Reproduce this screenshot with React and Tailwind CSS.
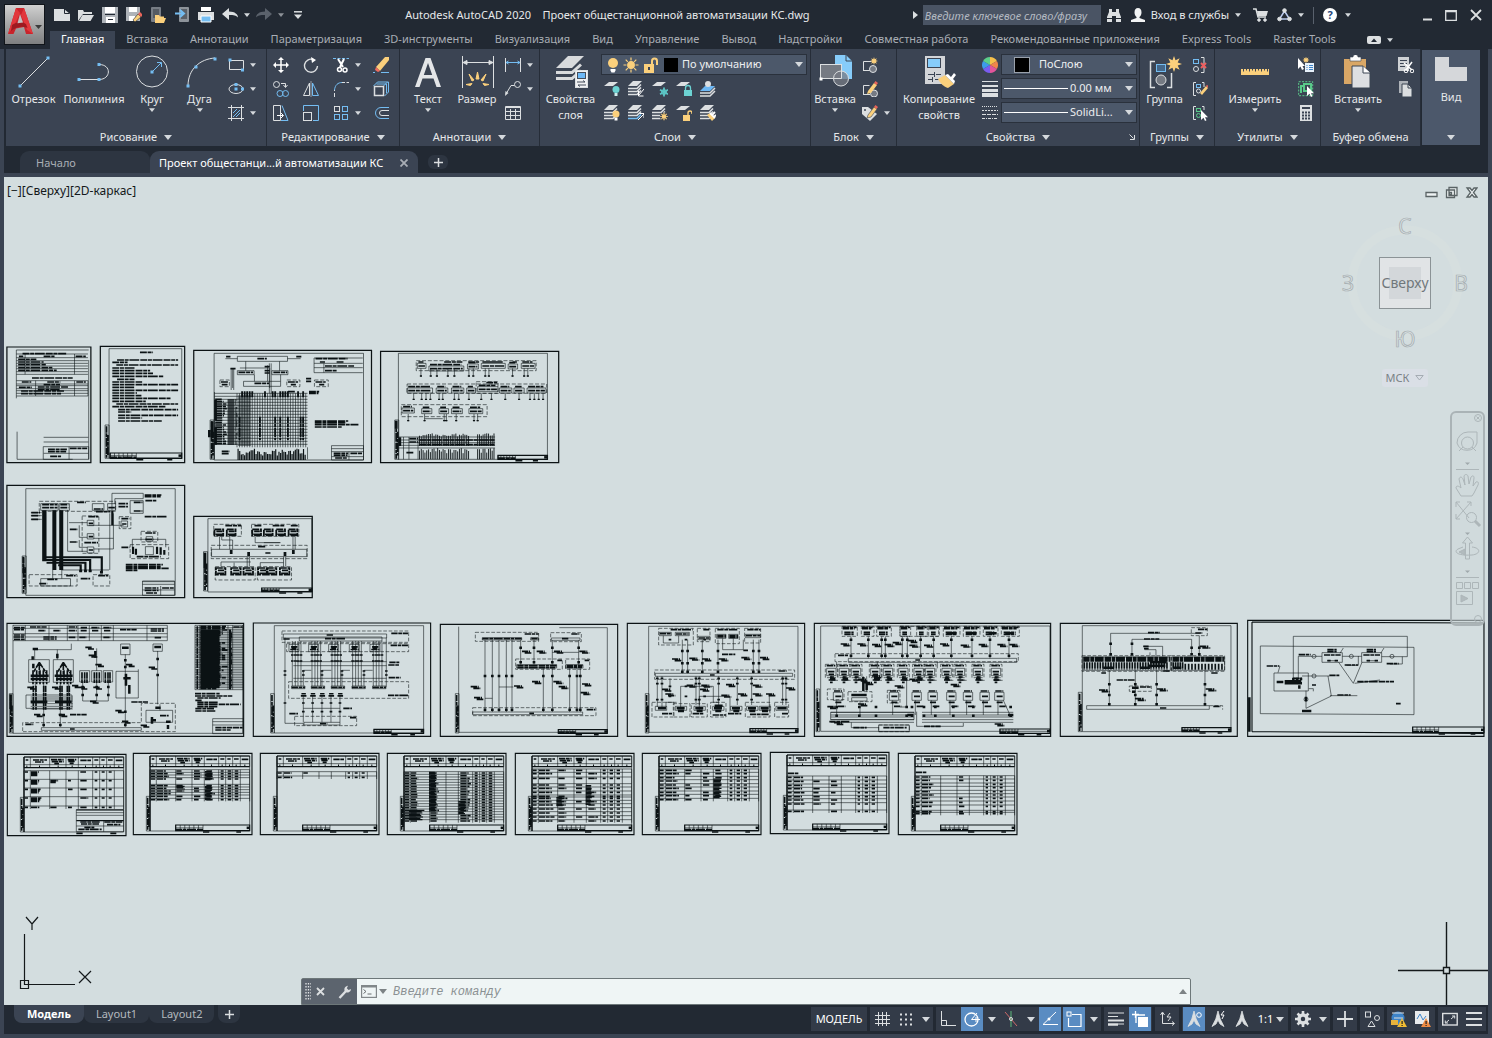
import React, { useState } from "react";
import clsx from "clsx";

const W = "#dcdfe1";
const B = "#74bdf2";
const Y = "#fbd07c";

/* ---------- small shared pieces ---------- */

const Ico = ({ w = 16, h = 16, vb, children }) => (
  <svg width={w} height={h} viewBox={vb || `0 0 ${w} ${h}`} fill="none" stroke={W} className="shrink-0" aria-hidden="true">
    {children}
  </svg>
);

const Caret = ({ big }) => (
  <svg width={big ? 8 : 6} height={big ? 5 : 4} viewBox="0 0 8 5" className="shrink-0" aria-hidden="true">
    <path d="M0 0h8L4 5z" fill="#d5d9dd" />
  </svg>
);

const Dot = ({ x, y, c = B }) => <rect x={x - 1.5} y={y - 1.5} width="3" height="3" fill={c} stroke="none" />;

const layer = (y, c = W) => <path d={`M5 ${y}h9l-5 4H0z`} fill={c} stroke="none" />;
const stack = (low = W) => (
  <>
    <path d="M5 0h9L9 5H0z" fill={W} stroke="none" />
    <path d="M0 7.500h9l4-4M0 10.500h9l4-4" stroke={W} strokeWidth="1.6" />
    <path d="M0 13.500h9l4-4" stroke={low} strokeWidth="1.6" />
  </>
);
const pencil = (
  <g stroke="none">
    <path d="M8 12l6-7 2 2-6 7z" fill={Y} />
    <path d="M14 5l1-1.200 2 2L16 7z" fill="#e8645a" />
  </g>
);
const cursor = <path d="M9 5v10l2.500-2.300L13 16l1.500-.7-1.500-3H16z" fill="#fff" stroke="none" />;
const sun = (cx, cy, r) => (
  <g stroke={Y} strokeWidth="1.2">
    <circle cx={cx} cy={cy} r={r * 0.55} fill={Y} />
    <path d={[0, 45, 90, 135, 180, 225, 270, 315].map((a) => {
      const t = (a * Math.PI) / 180;
      return `M${cx + Math.cos(t) * r * 0.75} ${cy + Math.sin(t) * r * 0.75}L${cx + Math.cos(t) * r * 1.25} ${cy + Math.sin(t) * r * 1.25}`;
    }).join("")} />
  </g>
);
const star = (cx, cy, r) => (
  <path fill={Y} stroke="none" d={"M" + Array.from({ length: 16 }, (_, i) => {
    const t = (i * Math.PI) / 8;
    const k = i % 2 ? r * 0.5 : r;
    return `${cx + Math.cos(t) * k} ${cy + Math.sin(t) * k}`;
  }).join("L") + "z"} />
);

/* ---------- quick access icons ---------- */

const quick = [
  ["Создать", <Ico key="i"><path d="M0 2h10l6 5v7H0z" fill={W} stroke="none" /><path d="M10.500 1.500v5h5" stroke="#222933" /></Ico>],
  ["Открыть", <Ico key="i"><path d="M0 14V3h5l1 2h8v2H5z" fill={W} stroke="none" /><path d="M4.500 8H16l-3.500 6H1z" fill={W} stroke="none" /></Ico>],
  ["Сохранить", <Ico key="i"><path d="M0 0h16v16H0z" fill="#aeb3b9" stroke="none" /><path d="M3 0h10v6H3zM4 10h9v6H4z" fill="#fff" stroke="none" /><path d="M3 7.500h10M6 12.500h5" stroke="#222933" /></Ico>],
  ["Сохранить как", <Ico key="i"><path d="M0 0h14v14H0z" fill="#aeb3b9" stroke="none" /><path d="M3 0h8v5H3zM3 9h6v5H3z" fill="#fff" stroke="none" /><path d="M7 13l5-6 3 3-6 5z" fill={Y} stroke="#222933" strokeWidth=".6" /><path d="M12 7l2-2 3 3-2 2z" fill="#e8645a" stroke="none" /></Ico>],
  ["Открыть из Web", <Ico key="i"><rect x="1" y="0" width="10" height="15" rx="1" fill="#777d85" stroke="none" /><path d="M3 2h6v9H3z" fill="#555b63" stroke="none" /><path d="M5 15V8h4l1 1.500h4V11h2l-2 5H5z" fill={Y} stroke="none" /></Ico>],
  ["Сохранить в Web", <Ico key="i"><rect x="5" y="0" width="10" height="15" rx="1" fill="#8d939a" stroke="none" /><path d="M7 2h6v10H7z" fill="#5b6169" stroke="none" /><path d="M1 6.500h8M6 3l4 3.500L6 10" stroke={B} strokeWidth="2" /></Ico>],
  ["Печать", <Ico key="i"><path d="M0 5h16v8H0z" fill={W} stroke="none" /><path d="M3 0h10v4H3z" fill="#fff" stroke="none" /><path d="M3 9h10v6H3z" fill={B} stroke="#fff" /></Ico>],
];

/* ---------- ribbon icons ---------- */

const big = {
  line: <Ico w={36} h={36}><path d="M4 31L32 3" /><Dot x={4} y={31} /><Dot x={32} y={3} /></Ico>,
  pline: <Ico w={36} h={36}><path d="M3 24.500h20c12 0 13-15 0-15" /><Dot x={3} y={24.500} /><Dot x={23} y={24.500} /><Dot x={23} y={9.500} /></Ico>,
  circle: <Ico w={36} h={36}><circle cx="18" cy="16.500" r="15.500" /><path d="M19 16l8-8M23 7.500h4.500V12" stroke={B} /><Dot x={18} y={17} /></Ico>,
  arc: <Ico w={36} h={36}><path d="M6 31C6 14 18 4 33 3" /><Dot x={6} y={31} /><Dot x={14} y={12} /><Dot x={33} y={4} /></Ico>,
  text: <Ico w={36} h={36}><path d="M5 32L15.500 3h5L31 32h-4.500l-3-8.500h-11l-3 8.500zM13.800 20h8.400L18 8z" fill="#e4e6e8" stroke="none" /></Ico>,
  dim: <Ico w={36} h={36}><path d="M3.500 1v32M34.500 1v32M5 7.500h28" /><path d="M4 7.500l4-2v4zM34 7.500l-4-2v4z" fill={W} /><path d="M7 29.500l6-1-1.500 2zM30 29.500l-6-1 1.500 2zM10 19l5 6-2 1zM27 19l-5 6 2 1zM18.500 17l1.500 7h-3z" fill={Y} stroke={Y} /></Ico>,
  layers: <Ico w={36} h={36}><path d="M15 1h16L19 13H3z" fill="#d8dadc" stroke="none" /><path d="M3 17.500h16l9-8M3 23.500h16l9-8" stroke="#d8dadc" strokeWidth="3" /><rect x="22.500" y="15.500" width="12" height="17" fill="#f0f1f2" /><rect x="24.500" y="17.500" width="8" height="6" fill="#6db8f5" stroke="#444d5a" /><path d="M24 27h8l-2-1.500M33 30h-8l2 1.500" stroke="#444d5a" /></Ico>,
  insert: <Ico w={36} h={36}><path d="M18 0h11l6 6v18H18z" fill="#86ccfa" stroke="none" /><path d="M29 0v6h6" stroke="#3b4453" /><rect x="3.500" y="9.500" width="21" height="14" fill="#757a83" /><circle cx="24" cy="23.500" r="7.500" fill="#757a83" fillOpacity=".75" /><path d="M24.500 9.500v14h-8" /><Dot x={4} y={24} c="#fff" /></Ico>,
  match: <Ico w={36} h={36}><path d="M4 1h20v28H4z" fill="#d3d5d8" stroke="none" /><rect x="6.500" y="3.500" width="13" height="9" fill="#86ccfa" stroke="#3b4453" /><path d="M7 19.500h6M15 19.500h5M13.500 17v5M7 24.500h4M14 24.500h6M11.500 22v5" stroke="#3b4453" /><path d="M17 24l7-4 9 9-6 4c-4-1-8-5-10-9z" fill={Y} stroke="none" /><path d="M24 20l3-1 3 3 3-4 2 2-3 4 2 2-1 3z" fill="#fff" stroke="none" /></Ico>,
  group: <Ico w={36} h={36}><path d="M8 6.500H3.500v26H8M20 32.500h4.500V18" strokeWidth="1.500" /><rect x="9.500" y="9.500" width="9" height="7" fill="#456789" stroke={B} /><circle cx="14" cy="25" r="5" fill="#757a83" />{star(27, 9, 8)}</Ico>,
  measure: <Ico w={36} h={36}><path d="M4 14h28v6H4z" fill={Y} stroke="none" /><path d="M6.500 13.500v3M9.500 13.500v2M12.500 13.500v3M15.500 13.500v2M18.500 13.500v3M21.500 13.500v2M24.500 13.500v3M27.500 13.500v2M30.500 13.500v3" stroke="#3b4453" /></Ico>,
  paste: <Ico w={36} h={36}><path d="M4 4h22v25H4z" fill="#d9a766" stroke="none" /><path d="M10 2h3a2 2 0 0 1 5 0h3v4H10z" fill="#fff" stroke="#3b4453" strokeWidth=".6" /><path d="M12 11h11l7 6v16H12z" fill="#dddfe2" stroke="#3b4453" /><path d="M23 11v7h7" stroke="#3b4453" fill="#fff" /></Ico>,
  view: <Ico w={36} h={36}><path d="M2 4h14v10h18v14H2z" fill="#d5d7da" stroke="none" /></Ico>,
};

const sm = {
  rect: <Ico><path d="M1.500 3.500h14v9h-14z" /><Dot x={2} y={3} /><Dot x={14.500} y={13} /></Ico>,
  ellipse: <Ico><ellipse cx="8" cy="8" rx="7" ry="4.500" /><Dot x={8} y={8} /><Dot x={8} y={3.500} /><Dot x={14.500} y={8} /></Ico>,
  hatch: <Ico><path d="M3.500 0v16M13.500 0v16M0 2.500h16M0 13.500h16" /><path d="M5 8l4-4M5 12l7-7M8 12l4-4" stroke={B} /></Ico>,
  move: <Ico><path d="M8 1v14M1 8h14" strokeWidth="1.500" stroke="#fff" /><path d="M8 0l3 3H5zM8 16l3-3H5zM0 8l3-3v6zM16 8l-3-3v6z" fill="#fff" stroke="none" /></Ico>,
  rotate: <Ico><path d="M10 2.500A6.500 6.500 0 1 0 14.500 9" strokeWidth="1.400" /><path d="M8 0l5 3-4 3z" fill="#fff" stroke="none" /></Ico>,
  trim: <Ico><path d="M0 1.500h16" stroke={B} strokeDasharray="3 1.500" /><path d="M5 2l5 8M11 2L7 10" strokeWidth="2" stroke="#fff" /><circle cx="6.500" cy="12.500" r="2" stroke="#fff" strokeWidth="1.500" /><circle cx="12" cy="13" r="2" stroke="#fff" strokeWidth="1.500" /></Ico>,
  erase: <Ico><path d="M3 10L12 0h4v3L7 14z" fill={Y} stroke="none" /><path d="M3 10l4 4-2 1-3-2z" fill="#f06a5f" stroke="none" /><path d="M0 15.500h2M8 15.500h8" stroke={B} /></Ico>,
  copy: <Ico><circle cx="3.500" cy="3.500" r="3" /><path d="M8 2.500h4.500V6M10.500 4l2 2.500 2-2.500" /><circle cx="7" cy="12.500" r="3" stroke={B} /><circle cx="12.500" cy="12.500" r="3" stroke={B} /></Ico>,
  mirror: <Ico><path d="M6.500 2v12.500h-6z" /><path d="M9.500 2v12.500h6z" stroke={B} /><path d="M8 0v16" strokeWidth=".6" /></Ico>,
  fillet: <Ico><path d="M1.500 16V9" strokeDasharray="4 2" /><path d="M1.500 9C2 4 5 1.500 9 1.500" stroke={B} /><path d="M9 1.500h7" strokeDasharray="3 1.500" /></Ico>,
  box: <Ico><rect x="1.500" y="5.500" width="9" height="9" strokeWidth="1.500" /><path d="M0.500 5l4-4h11v10l-4 4M10.500 5l4-4M3.500 3h10v9" stroke={B} /></Ico>,
  stretch: <Ico><path d="M.500.500h7v15h-7z" /><path d="M9 .500l6 15H8" stroke={B} /><path d="M4 10.500h6M8 8l2.500 2.500L8 13" stroke="#fff" /></Ico>,
  scale: <Ico><path d="M.500 6V.500h15v15H10" stroke={B} /><rect x=".5" y="7.500" width="8" height="8" /></Ico>,
  array: <Ico><rect x="1.500" y="1.500" width="5" height="5" /><g stroke={B}><rect x="9.500" y="1.500" width="5" height="5" /><rect x="1.500" y="9.500" width="5" height="5" /><rect x="9.500" y="9.500" width="5" height="5" /></g></Ico>,
  offset: <Ico><path d="M16 2.500H8a5.500 5.500 0 0 0 0 11h8" stroke={B} /><path d="M16 5.500H9a2.500 2.500 0 0 0 0 5h7" /></Ico>,
  linear: <Ico><path d="M.500 1v14M15.500 1v14" /><path d="M1 5.500h14M3.500 4L1 5.500 3.500 7M12.500 4L15 5.500 12.500 7" stroke={B} /></Ico>,
  leader: <Ico><circle cx="12.500" cy="3.500" r="3" /><path d="M9.500 4.500H6L1 13" /><path d="M0 15l.500-5 3 2z" fill={W} stroke="none" /></Ico>,
  table: <Ico><path d="M.500 1.500h15v13h-15z M1 2.500h14M.500 6.500h15M.500 10.500h15M5.500 4v10M10.500 4v10" /></Ico>,
  l1: <Ico>{layer(1)}<circle cx="12" cy="8.500" r="3.500" fill="#6cd3d3" stroke="none" /><path d="M12 12v3" strokeWidth="3" stroke="#cfeeee" /></Ico>,
  l2: <Ico>{stack()}<path d="M16 8l-5 6M10.500 10v5h5" stroke="#fff" /></Ico>,
  l3: <Ico>{layer(1)}<path d="M12 6.500v9M8 8.800l8 4.400M16 8.800l-8 4.400" stroke="#5cc6c6" strokeWidth="1.800" /><circle cx="12" cy="11" r="2.500" stroke="#5cc6c6" /></Ico>,
  l4: <Ico>{layer(1)}<path d="M8 9h8v6H8z" fill="#6cd3d3" stroke="none" /><path d="M9.500 9V7a2.500 2.500 0 0 1 5 0v2" stroke="#6cd3d3" strokeWidth="1.300" /></Ico>,
  l5: <Ico><path d="M5 5h10l-5 5H0z" fill="#6db8f5" stroke="none" /><path d="M0 12h10l5-5M0 15h10l5-5" strokeWidth="1.500" /><circle cx="8" cy="3" r="3" fill={W} stroke="none" /></Ico>,
  l6: <Ico>{stack()}<circle cx="12" cy="9" r="3.500" fill={Y} stroke="none" /><path d="M12 12.500v3" strokeWidth="3" stroke="#fff" /></Ico>,
  l7: <Ico>{stack(B)}<path d="M10 15l6-6M11.500 8.500h4.500V13" stroke="#fff" /></Ico>,
  l8: <Ico>{stack()}<circle cx="12" cy="11.500" r="4" fill="#3b4453" stroke="none" />{sun(12, 11.500, 3)}</Ico>,
  l9: <Ico>{layer(1)}<path d="M7 10h7v6H7z" fill={Y} stroke="none" /><path d="M12 10V8a2 2 0 0 1 4 0v1" stroke={Y} strokeWidth="1.400" /></Ico>,
  l10: <Ico>{stack()}<path d="M7 10l3-2 5 5-3 3z" fill={Y} stroke="none" /><path d="M10 8l5 5M12 10l3-3M14 12l2-2" stroke="#fff" strokeWidth="1.800" /></Ico>,
  b1: <Ico><path d="M1.500 13.500v-9h8M1 13.500h7" /><circle cx="11" cy="12" r="3.500" fill="#757a83" />{star(12, 4, 4)}</Ico>,
  b2: <Ico><path d="M1.500 13.500v-9h6M1 13.500h7" /><circle cx="12" cy="12.500" r="3.500" fill="#757a83" /><path d="M6 10l6-8 3 2-6 8-4 1z" fill={Y} stroke="none" /><path d="M12 2l1.500-2L16 2l-1.500 2z" fill="#e8645a" stroke="none" /></Ico>,
  b3: <Ico><path d="M0 2h6l9 7-7 7L0 9z" fill={W} stroke="none" /><circle cx="3" cy="5" r="1" fill="#3b4453" stroke="none" /><path d="M6 10l6-8 3 2-6 8-4 1z" fill={Y} stroke="#3b4453" strokeWidth=".6" /><path d="M12 2l1.500-2L16 2l-1.500 2z" fill="#e8645a" stroke="none" /></Ico>,
  g1: <Ico><rect x="1.500" y="2.500" width="5" height="4" stroke={B} /><circle cx="4" cy="12" r="2.500" /><path d="M9 .500h3v15H9" /><path d="M9 6l5 5M14 6l-5 5" stroke="#ef5f5f" strokeWidth="2" /></Ico>,
  g2: <Ico><path d="M4 1.500H1.500v13H4M10 1.500h2V6" /><rect x="4.500" y="3.500" width="4" height="3" stroke={B} /><circle cx="6.500" cy="10" r="2" />{pencil}</Ico>,
  g3: <Ico><path d="M4 1.500H1.500v13H4M10 1.500h2V5" /><rect x="4.500" y="3.500" width="4" height="3" stroke="#59c98a" /><circle cx="6.500" cy="10.500" r="2" stroke="#59c98a" />{cursor}</Ico>,
  u1: <Ico><path d="M0 1v11l2.500-2.500L4 13l2-1-1.500-3H7z" fill="#fff" stroke="none" />{star(8, 3, 3.500)}<path d="M7 6h9v9H7z" fill="#e8f2fb" stroke="none" /><path d="M8.500 8.500h1M11 8.500h4M8.500 10.500h1M11 10.500h4M8.500 12.500h1M11 12.500h4" stroke="#3c83c8" /></Ico>,
  u2: <Ico><rect x=".7" y=".7" width="14" height="14" stroke="#59c98a" strokeDasharray="2 1.300" /><path d="M3 12V5h3M6 3h7v7H6z" stroke="#59c98a" strokeWidth="2" />{cursor}</Ico>,
  u3: <Ico><path d="M2 0h12v16H2z" fill={W} stroke="none" /><path d="M4 2h8v2H4z" fill="#3b4453" stroke="none" /><path d="M4 7.500h8M4 10.500h8M4 13.500h8" stroke="#3b4453" strokeWidth="2" strokeDasharray="2 1" /></Ico>,
  c1: <Ico><path d="M0 0h11v14H0z" fill="#cfd2d5" stroke="none" /><path d="M2 3.500h7M2 6.500h7M2 9.500h5" stroke="#3b4453" /><path d="M6 6l8 7M14 5l-6 8" stroke="#fff" strokeWidth="1.500" /><circle cx="8" cy="14" r="1.800" stroke="#fff" /><circle cx="14" cy="14" r="1.800" stroke="#fff" /></Ico>,
  c2: <Ico><path d="M1 0h9v12H1z" fill="#aeb3b9" stroke="none" /><path d="M4 3h6l4 4v9H4z" fill={W} stroke="#3b4453" /><path d="M10 3v4h4" stroke="#3b4453" /></Ico>,
  wheel: (
    <Ico>
      <g stroke="none">
        <path d="M8 8L8 0A8 8 0 0 1 14.900 4z" fill="#f6c04a" /><path d="M8 8L14.900 4A8 8 0 0 1 14.900 12z" fill="#f0864a" />
        <path d="M8 8L14.900 12A8 8 0 0 1 8 16z" fill="#e2559b" /><path d="M8 8L8 16A8 8 0 0 1 1.100 12z" fill="#7a5cf0" />
        <path d="M8 8L1.100 12A8 8 0 0 1 1.100 4z" fill="#3d9be9" /><path d="M8 8L1.100 4A8 8 0 0 1 8 0z" fill="#5ccf8a" />
      </g>
    </Ico>
  ),
  weights: <Ico><path d="M0 .500h16" /><path d="M0 5h16" strokeWidth="2" /><path d="M0 9.500h16" strokeWidth="3" /><path d="M0 14h16" strokeWidth="4" /></Ico>,
  types: <Ico><path d="M0 1.500h16" strokeDasharray="1 1" /><path d="M0 5.500h16" strokeDasharray="2 1" /><path d="M0 9.500h16" strokeDasharray="4 1" /><path d="M0 13.500h16" strokeDasharray="3 1 1 1" /></Ico>,
};

/* ---------- ribbon building blocks ---------- */

function Panel({ title, width, noCaret, launcher, children }) {
  return (
    <section className={clsx("flex shrink-0 flex-col border-r border-[#262d38] bg-[#3b4453]", width)}>
      <div className="flex h-[79px]">{children}</div>
      <div className="relative flex h-[18px] items-center justify-center">
        <button className="flex items-center gap-[7px] text-[#e6e8ea]">
          {title}
          {!noCaret && <Caret big />}
        </button>
        {launcher && (
          <button aria-label="Параметры панели" className="absolute bottom-[6px] right-1">
            <Ico w={6} h={6}><path d="M.5.5l4 4M5.500 1v4.500H1" /></Ico>
          </button>
        )}
      </div>
    </section>
  );
}

const BigTool = ({ icon, lines, caret, width }) => (
  <button className={clsx("flex shrink-0 flex-col items-center pt-[6px]", width)}>
    {big[icon]}
    {lines.map((l) => <span key={l} className="leading-4 whitespace-nowrap">{l}</span>)}
    {caret && <span className="pt-px"><Caret /></span>}
  </button>
);

const SmallCol = ({ items, width, pad }) => (
  <div className={clsx("flex shrink-0 flex-col pt-1", width, pad)}>
    {items.map(([name, caret]) => (
      <button key={name} aria-label={name} className="flex h-6 items-center gap-[6px]">
        {sm[name]}
        {caret && <Caret />}
      </button>
    ))}
  </div>
);

const Combo = ({ label, text, children }) => (
  <div className="relative flex h-[21px] w-full items-center border border-[#2a313c] bg-[#4c586a] pl-[8px] pr-[3px]">
    {children}
    <select aria-label={label} className="min-w-0 flex-1 appearance-none truncate bg-transparent text-[#eceef0] outline-none">
      <option>{text}</option>
    </select>
    <Caret big />
  </div>
);

/* ---------- sheets of the drawing ---------- */

const r = (x, y, w, h) => `M${x} ${y}h${w}v${h}h${-w}z`;
const vs = (xs, a, b) => xs.map((x) => `M${x} ${a}V${b}`).join("");
const hs = (ys, a, b) => ys.map((y) => `M${a} ${y}H${b}`).join("");
const seq = (a, b, s) => Array.from({ length: Math.floor((b - a) / s) + 1 }, (_, i) => a + i * s);
const rand = (i) => {
  const t = Math.sin(i * 127.1) * 43758.5453;
  return t - Math.floor(t);
};
const rag = (list) => list.map(([x, y, w]) => `M${x} ${y}h${w}`).join("");
// device outline with two rows of marks
const dev = (x, y, w, h) => r(x, y, w, h);
const devText = (x, y, w, h) => `M${x + w * 0.2} ${y + h * 0.35}h${w * 0.6}M${x + w * 0.12} ${y + h * 0.7}h${w * 0.76}`;
// cable terminals
const knots = (xs, ...ys) => xs.flatMap((x) => ys.map((y) => `M${x - 4} ${y}h8`)).join("");
const labels = (list, w = 26) => list.map(([x, y]) => `M${x - w / 2 - 4} ${y - 3}h${w}M${x - w / 2 + 4} ${y + 2}h${w - 2}`).join("");

const Ink = ({ frame, line, dash, text, bold }) => (
  <g fill="none" stroke="#0b1214">
    {frame && <path d={frame} strokeWidth="3.4" />}
    {line && <path d={line} strokeWidth="2" strokeOpacity=".85" />}
    {dash && <path d={dash} strokeWidth="2" strokeDasharray="11 5" strokeOpacity=".85" />}
    {text && <path d={text} strokeWidth="5" strokeDasharray="19 2 11 2 27 3" />}
    {bold && <path d={bold} strokeWidth="7.5" />}
  </g>
);

const Side = ({ x, y, h }) => (
  <Ink line={r(x, y, 11, h)} text={`M${x + 4} ${y + 4}v${h - 6}M${x + 8} ${y + h * 0.3}v${h * 0.6}`} />
);

const Stamp = ({ x, y, x2, w = 76, h = 16 }) => (
  <Ink
    frame={r(x, y, x2 - x, h)}
    line={vs(seq(x, x + w, w / 6), y, y + h) + hs([y + h / 2], x, x + w)}
    text={`M${x} ${y + h - 3}h${w}M${x + w} ${y + h + 4}h20M${x2 - 40} ${y + h + 4}h14`}
    bold={`M${x2 - 9} ${y + h / 2}h9`}
  />
);

function RowOne() {
  const note = [[385, 37, 36], [322, 60, 168], [309, 67, 42], [320, 75, 170], [309, 84, 64], [309, 92, 104], [309, 100, 112], [309, 109, 140], [322, 118, 48], [309, 126, 82], [309, 134, 181], [309, 142, 60], [309, 151, 181], [309, 159, 68], [309, 167, 80], [309, 175, 160], [309, 184, 92], [320, 192, 170], [309, 200, 146], [325, 209, 165], [325, 216, 36], [325, 226, 165], [325, 234, 66], [325, 243, 120]];
  const net = seq(652, 844, 7);
  const tail = seq(655, 842, 4.500);
  const tail2 = seq(1154, 1362, 5).filter((x) => x < 1292 || x > 1310);
  const a = [[1148, 70, 24], [1180, 78, 96], [1286, 72, 30], [1324, 70, 66], [1398, 72, 26], [1434, 70, 38]];
  const b = [[1120, 144, 70], [1200, 144, 32], [1242, 144, 34], [1284, 144, 24], [1314, 140, 56], [1374, 144, 34], [1414, 144, 28], [1450, 144, 52]];
  const c = [[1106, 204, 34], [1160, 206, 28], [1208, 206, 26], [1242, 206, 30], [1290, 206, 38]];
  const pa = [1158, 1185, 1202, 1232, 1250, 1290, 1302, 1335, 1345, 1410, 1442, 1452];
  const pb = [1138, 1160, 1172, 1184, 1208, 1218, 1250, 1262, 1290, 1324, 1352, 1390, 1428, 1458, 1470, 1482, 1494];
  const pc = [1123, 1168, 1222, 1228, 1255, 1304, 1314];
  return (
    <g transform="translate(0 340) scale(.3635 .3333)">
      <Ink
        frame={r(19, 21, 231, 347) + r(276, 19, 232, 349)}
        line={"M45 30H244M45 30V175M47 275V358H200M244 60V358" + hs([42, 53, 62, 70, 78, 86, 95, 103, 122, 132, 137, 146, 152, 160, 168], 45, 242) + vs([69, 205], 42, 103) + vs([98, 205, 242], 122, 168) + hs([292, 306, 340], 120, 243) + r(119, 320, 125, 38) + "M190 320V358" + r(300, 26, 200, 328)}
        text={rag([[62, 41, 120], [52, 49, 12], [120, 49, 30], [208, 49, 28], [50, 58, 50], [50, 66, 70], [50, 74, 76], [50, 83, 94], [50, 91, 106], [88, 114, 112], [60, 126, 26], [130, 126, 36], [210, 126, 26], [120, 134, 45], [52, 142, 36], [104, 141, 84], [104, 148, 60], [58, 153, 118], [58, 161, 110], [132, 328, 52], [132, 335, 50], [138, 349, 30], [192, 325, 48]])}
      />
      <Ink text={rag(note)} />
      <Side x={289} y={255} h={100} />
      <Stamp x={303} y={339} x2={500} w={72} />

      <Ink
        frame={r(533, 31, 489, 337)}
        line={r(589, 40, 411, 320) + r(653, 49, 138, 15) + r(670, 124, 102, 15) + r(653, 92, 46, 12) + r(748, 92, 44, 12) + "M620 56h33M791 56h36M676 64v28M769 64v28M640 84v60M660 84h80M736 76v48M742 84v60M700 104v20M772 104v20" + hs([54, 70, 83, 98], 864, 998) + "M864 54v44M891 70v28" + hs(seq(160, 320, 9), 590, 846) + vs(net, 160, 322) + vs([741, 746], 70, 160) + r(912, 317, 88, 43) + hs([326, 335, 350], 912, 1000) + "M590 156V358M846 322V358M960 335V360M636 84V150M643 84V150"}
        dash={r(605, 120, 26, 20) + r(789, 120, 36, 20) + r(865, 120, 38, 20)}
        text={rag([[708, 56, 26], [622, 50, 12], [815, 50, 14], [656, 97, 40], [752, 97, 38], [700, 130, 40], [608, 126, 20], [610, 134, 16], [792, 126, 28], [800, 134, 14], [868, 126, 28], [878, 134, 14], [728, 80, 14], [728, 92, 14], [728, 99, 14], [634, 86, 14], [842, 116, 14], [842, 124, 14], [868, 56, 88], [880, 66, 14], [926, 66, 20], [894, 78, 80], [894, 92, 34], [792, 155, 20], [850, 155, 28], [850, 160, 26], [866, 243, 92], [866, 248, 86], [866, 254, 120], [866, 261, 74], [610, 334, 22], [610, 341, 20], [918, 340, 40], [918, 346, 38], [922, 354, 34], [964, 340, 34]])}
      />
      <Ink
        line={hs(seq(168, 316, 4), 655, 690)}
        text={rag(seq(178, 316, 7).map((y, i) => [592, y, 18 + rand(i) * 16])) + rag(seq(180, 314, 6).map((y, i) => [626, y, 22 + rand(i + 7) * 6])) + vs(net.filter((_, i) => rand(i) > 0.5), 154, 172) + vs(net.filter((_, i) => rand(i + 40) > 0.8), 230, 300)}
        bold="M593 180V240M593 262V314"
      />
      <path d={tail.map((x, i) => `M${x} ${326 + rand(i) * 22}V360`).join("")} stroke="#0b1214" strokeWidth="3.200" fill="none" />
      <Side x={578} y={240} h={118} />
      <Ink bold="M576 270V292M584 244V290" />

      <Ink
        frame={r(1047, 34, 490, 334)}
        line={r(1096, 40, 410, 318) + [...a, ...b, ...c].map(([x, y, w]) => r(x, y, w, 15)).join("") + vs(pa, 85, 110) + vs(pb, 160, 180) + vs(pc, 222, 244) + hs([291, 300, 308, 316, 324], 1096, 1362) + vs([1110, 1125, 1150], 291, 358) + "M1168 236h50"}
        dash={r(1145, 62, 330, 30) + r(1120, 132, 384, 28) + r(1310, 125, 60, 35) + r(1104, 194, 236, 36)}
        text={[...a, ...b, ...c].map(([x, y, w]) => `M${x + 3} ${y - 4}h${w - 10}M${x + 3} ${y + 8}h${w - 6}`).join("") + rag([[1222, 66, 50], [1288, 66, 30], [1332, 66, 50], [1410, 66, 12], [1338, 128, 30], [1118, 338, 20], [1154, 300, 206], [1154, 314, 206], [1126, 296, 24], [1126, 306, 24]])}
      />
      <path d={[[pa, 108], [pb, 178], [pc, 242]].map(([xs, y]) => xs.map((x) => `M${x - 3} ${y}h6`).join("")).join("")} stroke="#0b1214" strokeWidth="4" />
      <path d={tail2.map((x, i) => `M${x} ${(i % 3 ? 324 : 332) + rand(i) * 8}V358M${x} ${280 + rand(i + 3) * 10}V318`).join("")} stroke="#0b1214" strokeWidth="2.600" fill="none" />
      <Side x={1086} y={240} h={118} />
      <Ink bold="M1090 242V266M1100 292V318" />
      <Stamp x={1370} y={346} x2={1506} w={48} h={12} />

      <Ink
        frame={r(19, 436, 489, 337)}
        line={r(71, 446, 411, 320) + r(112, 491, 48, 20) + r(163, 491, 28, 20) + r(254, 491, 32, 20) + r(296, 491, 22, 20) + r(358, 482, 36, 38) + r(240, 541, 18, 16) + r(240, 581, 18, 16) + r(240, 621, 18, 18) + r(333, 543, 18, 18) + "M308 510V460H394V476H316V492M166 510V600M186 510V634H240M190 548H240M244 556H340M302 520V690M258 595H312M258 627H312V520M85 518h30M85 527h30M85 538h30M218 556v36h22M218 600v22h22M145 690V716M170 716V690H300M364 622V598H402M456 622V598H420" + r(402, 590, 18, 14) + r(400, 620, 22, 24) + r(112, 716, 82, 22) + hs([725, 733, 750], 392, 480) + r(392, 723, 88, 43) + "M442 738V766"}
        dash={r(108, 484, 210, 30) + r(226, 528, 46, 112) + r(328, 530, 32, 36) + r(388, 574, 46, 32) + r(358, 614, 106, 42) + r(80, 704, 132, 34) + r(256, 704, 46, 34)}
        text={rag([[212, 487, 24], [116, 494, 42], [166, 494, 22], [116, 503, 42], [166, 503, 22], [258, 507, 26], [264, 515, 40], [298, 503, 18], [326, 491, 26], [326, 500, 26], [368, 487, 24], [368, 513, 24], [398, 465, 46], [398, 470, 44], [400, 482, 30], [398, 530, 60], [86, 518, 24], [86, 527, 22], [86, 538, 22], [243, 530, 28], [192, 568, 22], [192, 606, 22], [244, 550, 12], [244, 590, 12], [232, 608, 38], [244, 630, 12], [334, 536, 22], [336, 552, 12], [400, 579, 28], [400, 598, 22], [334, 622, 22], [376, 650, 66], [346, 674, 102], [346, 680, 96], [346, 685, 118], [346, 691, 34], [398, 744, 38], [398, 751, 38], [402, 759, 30], [446, 744, 34], [182, 707, 26], [270, 707, 28], [222, 716, 26], [130, 718, 28], [108, 731, 22]])}
      />
      {/* cable bundles */}
      <path
        d={vs([119, 125], 511, 664) + vs([147, 152, 166, 171], 511, 690) + "M309 512V556M116 652H280V700M122 660H248V696M128 668H235V696M160 676H222V696M366 620v22M374 626v18M432 620v22M442 622v22M452 630v14"}
        stroke="#0b1214" strokeWidth="6" fill="none"
      />
      <Ink text="M64 650V700" bold="M218 693h8M231 693h8M244 693h8M275 697h8" />
      <Side x={61} y={648} h={112} />

      <Ink
        frame={r(533, 529, 326, 244)}
        line={r(572, 536, 286, 220) + r(582, 628, 262, 22) + "M604 590V628M610 590V600H640V628M632 590V628M702 590V608H770M726 608h46M806 590V628M812 590V628M680 650V680M686 650V680M780 650V680M786 650V680M608 680V666H690M716 680V668H780M644 668V680"}
        dash={r(588, 553, 76, 36) + r(692, 553, 130, 36) + r(581, 616, 264, 40) + r(592, 680, 110, 40) + r(708, 680, 94, 40)}
        text={[590, 624, 694, 726, 760, 794].map((x) => dev(x, 568, 24, 18) + devText(x, 566, 26, 24)).join("") + [594, 636, 670, 710, 734, 770].map((x) => dev(x, 684, 26, 20) + devText(x, 682, 28, 26)).join("") + rag([[620, 557, 44], [700, 557, 20], [750, 557, 34], [800, 557, 20], [710, 620, 22], [730, 639, 14]])}
        bold="M636 630v12M684 636v12M784 636v12M807 630v12"
      />
      <Side x={560} y={635} h={118} />
      <Ink bold="M564 638v46" />
      <Stamp x={720} y={744} x2={858} w={48} h={11} />
    </g>
  );
}

function RowThreeLeft() {
  const bays = [875, 934, 994, 1056, 1118];
  const lower = [910, 938, 966, 993, 1020];
  return (
    <g transform="translate(0 615) scale(.3333)">
      <Ink
        frame={r(21, 25, 710, 339)}
        line={"M39 30V355H728V30" + hs([31, 40, 56, 66, 77], 39, 502) + vs([76, 147, 202, 234, 268, 304, 340, 441, 502], 31, 77) + r(86, 134, 62, 68) + r(160, 134, 60, 68) + r(78, 240, 138, 40) + r(348, 169, 67, 80) + r(362, 87, 28, 32) + r(459, 87, 28, 22) + r(438, 286, 80, 36) + "M104 134V104H214V86M172 104V134M290 100V168M248 200V258H325V200M290 200V258M376 118V336M473 108V268M131 202V336M181 202V336M106 200V240M206 200V240M124 338H424V346H124zM480 286V268M415 169v-6" + r(239, 167, 30, 34) + r(275, 167, 30, 34) + r(310, 167, 28, 34) + r(638, 311, 92, 45) + hs([320, 330], 638, 730)}
        dash={"M68 348V323H424V265H526V350H68"}
        text={rag([[42, 38, 34], [42, 44, 30], [42, 60, 34], [42, 66, 30], [42, 73, 34], [90, 36, 50], [115, 47, 22], [160, 47, 22], [206, 36, 26], [206, 47, 24], [242, 38, 20], [274, 38, 24], [310, 38, 24], [242, 47, 18], [276, 47, 20], [312, 47, 20], [130, 66, 40], [130, 72, 40], [206, 67, 22], [238, 67, 22], [310, 67, 22], [360, 44, 50], [452, 42, 40], [452, 48, 40], [464, 68, 20], [210, 299, 50], [394, 261, 50], [585, 236, 74], [585, 243, 112], [592, 249, 70], [586, 256, 20], [592, 262, 62], [592, 268, 130], [592, 275, 60], [586, 281, 56], [586, 288, 60], [76, 328, 24], [210, 342, 14], [480, 302, 26], [646, 338, 50], [646, 345, 46], [698, 338, 30]]) + labels([[270, 100], [280, 124], [300, 152], [96, 220], [170, 220], [230, 215], [116, 302], [190, 302], [250, 220], [294, 220], [392, 152], [360, 290], [460, 160], [284, 262], [380, 322], [436, 334]], 20)}
        bold={"M98 102h16M98 124V134M172 116v14M92 182h54M164 182h54M92 192h50M168 192h48M92 260h50M165 260h50M366 98h20M463 96h20M370 190h22M388 210v26M466 278h16M286 108v20M452 316h16M498 320h14M504 330v12M456 306v20"}
      />
      {/* relay cabinets */}
      <Ink
        line={hs([246, 252, 258, 266, 274, 282], 92, 218)}
        text={"M118 142l-20 34M118 142l22 34M118 146v32M190 142l-20 34M190 142l22 34M190 146v32" + vs([99, 110, 120, 130, 140, 171, 182, 192, 202, 212], 166, 208) + vs([100, 108, 131, 137, 180, 186, 202, 208], 212, 284) + vs([246, 254, 261, 283, 290, 298, 316, 324, 330], 172, 206)}
        bold={knots([131, 181], 300, 330) + knots([248, 290, 325], 216, 240) + knots([376], 136, 156, 290, 330) + knots([473], 132, 180) + "M378 176V212M100 146V160"}
      />
      {/* bill of materials */}
      <Ink
        line={r(585, 31, 145, 193) + hs(seq(38, 222, 5), 585, 730) + vs([599, 684, 698], 31, 224)}
        text={rag(seq(34, 222, 5.500).map((y, i) => [601, y, 48 + rand(i + 2) * 36])) + rag(seq(46, 222, 5).map((y, i) => [687, y, 6 + rand(i) * 4])) + "M592 34V222M592 34V222M700 36h28"}
        bold={vs([606, 613, 620, 627, 634, 641, 648, 655], 44, 220)}
      />
      <Side x={28} y={236} h={118} />
      <Ink bold="M32 238v44" />

      <Ink
        frame={r(760, 24, 532, 340)}
        line={r(823, 32, 448, 322) + r(850, 57, 310, 12) + r(898, 66, 248, 12) + "M855 68V325H910V332M1159 68V215" + bays.map((x) => r(x - 8, 88, 30, 22) + r(x, 213, 40, 8) + vs([x + 2, x + 11, x + 19, x + 28], 78, 213)).join("") + lower.map((x) => `M${x} 240V322`).join("") + r(912, 322, 108, 8) + "M910 212V166H934M966 212V166H994M1026 212V166H1050M1092 212V166H1118M890 140H1160M880 152H1160M880 190H1160M910 280H1020"}
        dash={r(846, 48, 380, 34) + r(860, 86, 366, 24) + r(866, 200, 360, 50) + r(884, 304, 186, 28)}
        text={bays.map((x) => devText(x - 8, 88, 32, 22) + `M${x} 217h40`).join("") + lower.map((x) => devText(x - 10, 230, 22, 18)).join("") + knots(bays.flatMap((x) => [x + 2, x + 11, x + 19, x + 28]), 120, 138) + rag([[980, 60, 20], [975, 71, 60], [1174, 55, 50], [1172, 91, 52], [1165, 150, 34], [1168, 142, 30], [1166, 188, 36], [1164, 241, 60], [1050, 308, 20], [1030, 280, 26], [960, 326, 22], [868, 296, 26], [850, 72, 20]]) + knots(lower, 264, 290) + knots([855, 910, 966, 1026, 1092, 1159], 168, 180) + knots([855], 264)}
        bold={bays.map((x) => `M${x} 98h14`).join("")}
      />
      <Side x={812} y={236} h={118} />
      <Stamp x={1122} y={343} x2={1271} w={52} h={12} />
    </g>
  );
}

function RowThreeMid() {
  const t = [165, 187, 207, 229, 246];
  return (
    <g transform="translate(430 615) scale(.3333)">
      <Ink
        frame={r(31, 28, 532, 336)}
        line={"M86 35V352H532V38H388" + r(157, 68, 118, 7) + r(302, 68, 24, 7) + r(364, 69, 86, 7) + r(260, 149, 120, 10) + r(407, 149, 52, 10) + r(128, 291, 330, 8) + vs(t, 75, 291) + vs([272, 312], 75, 149) + vs([367, 446], 76, 149) + vs([340, 367, 419, 441, 451], 160, 291) + "M367 112H446M207 216H250M165 250H187"}
        dash={r(136, 52, 190, 27) + r(362, 53, 92, 27) + r(257, 132, 140, 31) + r(407, 132, 72, 31) + r(128, 278, 370, 24)}
        text={rag([[157, 71, 118], [304, 71, 22], [284, 57, 42], [424, 57, 24], [396, 71, 20], [262, 152, 118], [262, 158, 114], [410, 152, 48], [410, 157, 46], [382, 136, 14], [464, 136, 14], [298, 295, 14], [470, 284, 26]]) + labels([[292, 112], [336, 112], [388, 112], [464, 112], [138, 218], [148, 251], [268, 216], [322, 203], [386, 203], [402, 218], [472, 210], [468, 236]], 24)}
        bold={knots(t, 183, 284) + knots([340, 367, 419, 441, 451], 183, 284) + knots([272, 312, 367, 446], 98, 142)}
      />
      <Side x={76} y={236} h={118} />
      <Stamp x={385} y={344} x2={532} w={52} h={11} />

      <Ink
        frame={r(592, 25, 532, 339)}
        line={r(656, 34, 448, 318) + r(688, 52, 36, 10) + r(736, 52, 42, 10) + r(804, 64, 36, 10) + r(860, 58, 28, 12) + r(896, 58, 28, 12) + r(946, 58, 46, 10) + r(676, 175, 412, 9) + vs([757, 773, 817, 864, 970, 987], 74, 175) + vs([682, 696], 184, 276) + vs([798, 808, 866, 922, 965, 1058, 1068], 184, 270) + "M700 62V84H746V62M878 70V104H910V70M910 104H940V74M752 276V214H850V262H866M808 290V244H900V290M708 276V262H740M720 190V232M1018 240V290" + [676, 736, 792, 848, 902, 950, 988, 1038].map((x) => r(x, 274, 34, 12)).join("")}
        dash={r(686, 40, 104, 50) + r(802, 40, 38, 40) + r(856, 40, 72, 46) + r(944, 40, 48, 44) + r(674, 165, 420, 28) + r(666, 262, 66, 44) + r(730, 266, 50, 40) + r(784, 266, 48, 40) + r(842, 262, 46, 44) + r(946, 262, 74, 44) + r(1034, 262, 42, 44)}
        text={rag([[722, 44, 66], [820, 44, 18], [862, 44, 60], [952, 44, 40], [690, 56, 34], [738, 57, 38], [806, 69, 32], [862, 62, 26], [862, 66, 26], [898, 62, 26], [898, 67, 26], [948, 62, 42], [840, 180, 14], [1046, 168, 24], [696, 296, 30], [788, 296, 34], [848, 300, 40], [894, 296, 40], [1056, 296, 18], [960, 298, 56], [876, 118, 40], [940, 106, 14]]) + labels([[742, 135], [794, 133], [832, 135], [882, 135], [950, 131], [1006, 131], [712, 226], [722, 240], [786, 214], [830, 214], [826, 226], [904, 212], [984, 214], [940, 240], [984, 240], [1024, 240], [1084, 222], [890, 244]], 24)}
        bold={[738, 794, 850, 904, 952, 990].map((x) => `M${x + 2} 280h24M${x + 6} 288h18`).join("") + "M684 280h24M1042 280h28M854 272h24" + knots([757, 773, 817, 864, 970, 987], 108, 145, 170)}
      />
      <Ink text={knots([682, 696, 798, 808, 866, 922, 965, 1058, 1068], 190, 206, 254) + knots([720, 768, 824], 74, 214, 244)} />
      <Side x={646} y={236} h={118} />
      <Stamp x={960} y={341} x2={1104} w={50} h={12} />
    </g>
  );
}

function RowThreeRight() {
  const top = [[128, 42], [186, 34], [232, 40], [302, 28], [352, 28], [388, 28], [432, 46], [492, 46], [552, 40], [606, 50]];
  const mid = [80, 118, 154, 212, 250, 296, 342, 376, 426, 466, 520, 574];
  const low = [100, 268, 336, 384, 440, 490, 540, 584];
  const drops = [153, 205, 245, 256, 307, 322, 362, 401, 454, 516, 570, 627];
  const k = [928, 1006, 1070, 1215];
  return (
    <g transform="translate(800 615) scale(.3333)">
      <Ink
        frame={r(43, 25, 709, 339)}
        line={r(62, 33, 688, 316) + r(145, 130, 505, 12) + vs(drops, 64, 130) + mid.map((x) => r(x, 160, 28, 22) + `M${x + 14} 182V196H${x + 34}`).join("") + low.map((x) => r(x, 232, 28, 24) + `M${x + 10} 256V300`).join("") + hs([292, 300, 306, 314, 322], 92, 342) + hs([292, 300, 306, 314, 322], 366, 640) + "M190 184V230M200 184V230M320 196V276H300M350 290V334H490V324M154 322V338H236M180 262V300M610 256L630 300" + r(155, 248, 46, 10) + r(92, 292, 250, 22) + r(236, 330, 92, 20)}
        dash={top.map(([x, w]) => r(x - 2, 34, w + 4, 30)).join("") + r(105, 116, 550, 24) + r(300, 34, 116, 30) + r(82, 222, 50, 32) + r(144, 230, 72, 30) + r(262, 226, 38, 38) + r(236, 330, 92, 20) + mid.map((x) => r(x - 4, 148, 36, 40)).join("")}
        text={top.map(([x, w]) => `M${x} 37h${w}M${x} 41h${w - 6}M${x + 5} 52h${w - 14}M${x + 5} 58h${w - 14}`).join("") + mid.map((x) => `M${x} 152h26M${x + 4} 170h20M${x + 6} 178h16M${x + 10} 186h12M${x + 6} 195h22`).join("") + low.map((x) => `M${x + 2} 228h24M${x + 6} 244h18M${x + 6} 262h18M${x + 14} 274h22`).join("") + labels([[138, 90], [188, 90], [232, 92], [270, 92], [294, 86], [340, 80], [344, 94], [388, 94], [436, 90], [498, 94], [552, 92], [608, 92], [644, 92], [190, 196], [208, 206], [232, 186], [300, 216], [344, 196], [468, 212], [190, 270], [98, 278], [118, 326], [600, 330]], 24) + rag([[114, 121, 30], [346, 135, 14], [160, 338, 40], [372, 334, 50], [250, 338, 70], [88, 320, 60]])}
        bold={knots(drops, 74, 122) + knots([110, 178, 228, 320, 336, 372, 406, 460, 520, 632], 276, 302) + "M90 192h16M128 192h16M222 192h18M262 192h14M306 192h16M352 192h16M434 192h14M528 192h14M582 194h14M154 240h46M322 300h18M624 300h16M440 55h30M498 55h32M566 55h24M616 55h26M190 186v42M200 200v26"}
      />
      <Ink text={knots(mid.map((x) => x + 14), 188, 202)} line={"M110 140V160M232 140V160M412 140V160"} />
      <Side x={48} y={222} h={128} />
      <Stamp x={600} y={342} x2={750} w={54} h={13} />

      <Ink
        frame={r(781, 25, 531, 339)}
        line={r(847, 32, 446, 318) + "M932 122V55H1200M996 122V73H1175V122M1030 94H1088V124M1034 104H1068V124M1198 62V122M1050 112V122" + r(849, 126, 262, 40) + r(1116, 126, 158, 40) + vs(k, 166, 272) + r(860, 272, 368, 11)}
        dash={r(1174, 38, 48, 24) + r(846, 122, 268, 47) + r(1114, 122, 160, 47) + r(988, 213, 66, 16) + "M1228 272H1268V284"}
        text={hs([128, 133, 138], 850, 1110) + hs([128, 133, 138], 1118, 1272) + vs(seq(853, 1106, 8), 142, 164) + vs(seq(1120, 1150, 7), 142, 164) + vs(seq(1156, 1268, 10), 146, 164) + rag([[1044, 53, 36], [1032, 72, 46], [1194, 43, 28], [1186, 54, 22], [1030, 94, 16], [1032, 101, 14], [904, 174, 14], [1234, 174, 20], [950, 195, 54], [1080, 279, 20], [1240, 274, 22], [1090, 168, 20], [1020, 216, 34]]) + labels([[1216, 97], [914, 228], [1022, 254], [1088, 225], [1234, 225]], 26)}
        bold={knots(k, 208, 240, 268) + knots([932, 996], 86, 118) + knots([1175, 1198], 98, 118) + "M910 158h32M1050 142h50M1046 152h50M996 218h20M996 230h10M1120 158h24M1020 158h30"}
      />
      <Side x={835} y={232} h={118} />
      <Stamp x={1146} y={338} x2={1293} w={52} h={12} />
    </g>
  );
}

const RowThreeLast = () => (
  <g transform="translate(1230 600) scale(.3333)">
    <Ink
      frame={r(53, 61, 709, 348) + "M66 66V395M66 66L762 69M66 395L762 400"}
      line={"M91 138L552 142V344L91 341zM190 240V109H532V170H455M205 240V169H276M337 169H395M216 228H298M228 272V325M370 250L326 187M370 250L396 187M374 250L450 240M228 325L304 288L294 228M300 287H382M517 170V192H480M385 168V196H350M330 160l10-16M452 160l10-16M144 218l6-20M236 266h14v8"
        + r(132, 219, 103, 54) + r(276, 158, 61, 29) + r(395, 158, 60, 29) + "M246 169a6 6 0 1 0 12 0a6 6 0 1 0-12 0M246 228a6 6 0 1 0 12 0a6 6 0 1 0-12 0M358 169a6 6 0 1 0 12 0a6 6 0 1 0-12 0M480 169a6 6 0 1 0 12 0a6 6 0 1 0-12 0M222 298a6 6 0 1 0 12 0a6 6 0 1 0-12 0M292 182h30M410 182h30"}
      text={rag([[206, 164, 36], [292, 149, 28], [292, 155, 28], [410, 149, 28], [410, 155, 28], [282, 165, 50], [400, 165, 50], [344, 195, 40], [470, 191, 36], [110, 198, 38], [298, 226, 30], [382, 245, 110], [322, 285, 40], [498, 311, 14], [246, 255, 12], [190, 235, 26], [292, 182, 10], [314, 182, 10], [410, 182, 10], [434, 182, 10]])}
      bold="M140 246h20M164 250h52M164 244h50M216 333h28M190 233v8M201 233v8M213 233v8M208 256v10M228 290v14M58 292V395"
    />
    <Stamp x={548} y={381} x2={762} w={78} h={17} />
  </g>
);

// specification sheets, column edges relative to the sheet
const COLS = [51, 70, 128, 177, 214, 257, 278, 299, 322, 350];

const specs = [
  { x: 7, y: 754, rows: [54, 80, 106, 132, 160], widths: [10, 32, 26, 14, 26, 8, 9, 9, 0], tall: true, block: true },
  { x: 133, y: 753, rows: [54, 62, 70, 78, 98, 106, 114, 122, 130, 140], widths: [14, 44, 24, 22, 26, 9, 11, 11, 0], dark: [[216, 56, 22, 28], [216, 100, 22, 44], [130, 100, 26, 12]] },
  { x: 260, y: 753, rows: [60, 73], widths: [12, 34, 20, 0, 0, 7, 9, 9, 0] },
  { x: 387, y: 753, rows: seq(60, 206, 8), widths: [14, 22, 26, 0, 32, 9, 11, 11, 0], dark: [[126, 58, 22, 120], [66, 172, 44, 34], [214, 146, 22, 40]] },
  { x: 515, y: 753, rows: [52, 62, 76, 96, 106, 118, 130, 136, 146, 156, 168, 180, 192, 204], widths: [12, 48, 28, 22, 30, 9, 10, 10, 0], dark: [[124, 134, 20, 30], [212, 98, 18, 60]] },
  { x: 642, y: 753, rows: [52, 62, 74, 84, 96, 106, 118, 128, 140], widths: [12, 40, 20, 20, 22, 8, 10, 10, 0], dark: [[214, 78, 24, 62]] },
  { x: 770, y: 752, rows: [76, 88, 100, 110, 122, 134, 144, 156, 178], widths: [12, 36, 24, 20, 0, 7, 10, 10, 0], lead: 64 },
  { x: 898, y: 753, rows: [72, 82, 94, 104, 116, 126, 136, 148, 160, 176, 182], widths: [12, 36, 0, 18, 0, 7, 9, 9, 0], lead: 58 },
];

function SpecSheet({ x, y, rows, widths, tall, block, dark = [], lead }) {
  const first = rows[0] - 4;
  const last = rows[rows.length - 1] + 5;
  const marks = rows.flatMap((ry, i) =>
    widths.flatMap((w, c) => {
      if (!w || (c > 1 && c < 5 && rand(i * 9 + c + x) < 0.25)) return [];
      const left = COLS[c] + (c > 2 ? 6 : 2);
      const len = c === 0 || c > 4 ? w : w * (0.6 + rand(i + c * 5 + x) * 0.4);
      const out = [[left, ry, len]];
      if (tall && c === 1 && ry < 160) out.push([left, ry + 5, len * 0.9], [left, ry + 10, len * 0.8]);
      if (tall && c === 2 && ry < 160) out.push([left, ry + 5, len * 0.7]);
      return out;
    })
  );
  return (
    <g transform={`translate(${x} ${y}) scale(.3333)`}>
      <Ink
        frame={r(1, 1, 356, 244) + "M51 9V234M51 9H350M51 41H350"}
        line={r(51, 9, 299, 225) + hs([32], 51, 350) + vs(COLS, 9, 41) + vs(COLS, first, last) + hs(rows.map((v) => v - 4), 51, 350)}
        text={rag([[56, 18, 8], [78, 18, 42], [84, 24, 26], [132, 17, 38], [134, 23, 36], [142, 29, 14], [182, 17, 26], [184, 22, 20], [188, 28, 12], [220, 19, 32], [262, 18, 12], [283, 18, 10], [303, 18, 14], [326, 19, 22], [58, 37, 3], [96, 37, 3], [152, 37, 3], [194, 37, 3], [234, 37, 3], [266, 37, 3], [288, 37, 3], [308, 37, 3], [334, 37, 3]]) + rag(marks) + (lead ? `M53 ${lead}h34` : "")}
      />
      {dark.map(([dx, dy, w, h]) => (
        <path key={`${dx}-${dy}`} d={seq(0, h - 4, 4).map((s, i) => `M${dx} ${dy + s}h${w * (0.75 + rand(i + dx) * 0.3)}`).join("")} stroke="#0b1214" strokeWidth="3.600" />
      ))}
      <Side x={40} y={130} h={104} />
      {block ? (
        <Ink
          frame="M208 168H350M208 200H350"
          line={r(208, 167, 142, 66) + hs([176, 184, 216], 208, 350) + "M290 200V233"}
          text={rag([[220, 204, 58], [222, 210, 54], [232, 220, 30], [214, 226, 70], [292, 204, 54], [300, 212, 40], [208, 238, 20], [310, 238, 18]])}
        />
      ) : (
        <Stamp x={128} y={216} x2={350} w={82} h={17} />
      )}
    </g>
  );
}

const Drawing = () => (
  <svg className="absolute inset-0 h-full w-full" aria-label="Листы проекта" role="img">
    <g transform="translate(-4 -177)">
      <RowOne />
      <RowThreeLeft />
      <RowThreeMid />
      <RowThreeRight />
      <RowThreeLast />
      {specs.map((s) => <SpecSheet key={s.x} {...s} />)}
    </g>
  </svg>
);

/* ---------- canvas overlays ---------- */

const ViewCube = () => (
  <div className="absolute right-2 top-[28px] flex w-[150px] flex-col items-center">
    <svg width="150" height="156" viewBox="0 0 150 156" role="img" aria-label="Видовой куб">
      <circle cx="75" cy="78" r="53" fill="none" stroke="#d6dfdf" strokeWidth="9" />
      <rect x="49.500" y="52.500" width="51" height="51" fill="#e1e4e6" stroke="#8b9396" />
      <rect x="59" y="62" width="32" height="32" fill="#d3d7da" />
      <text x="75" y="83" textAnchor="middle" fontSize="14" fill="#70777b">Сверху</text>
      <g fill="#d6dee0" stroke="#a3abae" strokeWidth=".7" fontSize="21" textAnchor="middle">
        <text x="75" y="29">С</text>
        <text x="18" y="86">З</text>
        <text x="131" y="86">В</text>
        <text x="75" y="142">Ю</text>
      </g>
    </svg>
    <button className="mt-[8px] flex h-[18px] items-center gap-[6px] rounded-[3px] bg-[#dadfe6] px-1 text-[#7b8286]">
      МСК
      <svg width="9" height="6" viewBox="0 0 9 6" fill="none" stroke="#a5acb3"><path d="M.8.5h7.400L4.500 5z" /></svg>
    </button>
  </div>
);

const NavBar = () => (
  <div className="absolute right-[3px] top-[234px] h-[215px] w-[35px] rounded-md border-2 border-[#aab3b6] bg-[#cfd8da]/60">
    <svg width="31" height="211" viewBox="0 0 31 211" fill="none" stroke="#adb6b9" role="img" aria-label="Панель навигации">
      <circle cx="26" cy="5" r="3.500" /><path d="M24.500 3.500l3 3M27.500 3.500l-3 3" />
      <path d="M5 30a11 11 0 0 1 11-11h9v11a10.500 10.500 0 0 1-20 0z" /><circle cx="15.500" cy="30" r="6" /><path d="M7 38l4-4M24 38l-4-4" />
      <path d="M13 49.500h5L15.500 52z" fill="#9fa8ab" stroke="none" />
      <path d="M4 56.500h23M4 164.500h23" />
      <path d="M9 83l-5-8c0-3 3-2 5 0l-2-9c1-3 3-2 4 0l2 6-1-9c1-2 3-2 4 0l1 8 2-7c2-2 3-1 3 1l-1 8 3-4c2-1 3 1 2 3l-4 8-2 3z" />
      <path d="M4 89l13 16M19 89L4 106M4 94v-5h4M15 89h4v4M4 101v5h4" /><circle cx="19.500" cy="104.500" r="5" /><path d="M23 108l5 5" strokeWidth="3" />
      <path d="M13 119.500h5L15.500 122z" fill="#9fa8ab" stroke="none" />
      <path d="M13.500 146v-16h-3l5-6 5 6h-3v16zM20 134c9 1 9 7 0 8-14 1-19-3-14-6l5-2" /><path d="M7 139l6-3v6z" fill="#b2bbbe" />
      <path d="M13 157.500h5L15.500 160z" fill="#9fa8ab" stroke="none" />
      <path d="M4.500 169.500h6v6h-6zM12.500 169.500h6v6h-6zM20.500 169.500h6v6h-6zM4.500 178.500h16v13h-16z" /><path d="M9 182v7l7-3.500z" fill="#b2bbbe" />
      <circle cx="26" cy="206" r="3.500" />
    </svg>
  </div>
);

const CommandLine = () => (
  <div className="absolute inset-x-[297px] bottom-0 flex h-[27px] rounded-t-[2px] border border-[#6d7779] bg-[#eff5f5]">
    <div className="flex w-[55px] items-center bg-[#5c646e] pl-[3px]">
      <svg width="6" height="17" viewBox="0 0 6 17"><path d="M1 0v17M3.500 0v17M6 0v17" stroke="#dfe2e4" strokeDasharray="1.500 1.500" strokeWidth="1.300" /></svg>
      <button aria-label="Закрыть" className="ml-[5px]"><Ico w={9} h={9}><path d="M1 1l7 7M8 1L1 8" strokeWidth="1.800" /></Ico></button>
      <button aria-label="Адаптация" className="ml-[13px]">
        <Ico w={14} h={14}><path d="M1.500 13L8 6" strokeWidth="2.400" /><path d="M13 4a3.500 3.500 0 0 1-6 2.500C5.500 4 7 1 10 .8L8.800 3.200l1.800 1.900z" fill={W} stroke="none" /></Ico>
      </button>
    </div>
    <button aria-label="Последние команды" className="ml-[4px] flex items-center gap-[2px]">
      <Ico w={16} h={13}><rect x=".6" y=".6" width="14.800" height="11.800" stroke="#818789" strokeWidth="1.200" /><path d="M1 1.500h14" stroke="#818789" strokeWidth="2" /><path d="M2.500 4.500L5 6.500l-2.500 2M6.500 9h4" stroke="#666c6e" /></Ico>
      <svg width="8" height="5" viewBox="0 0 8 5"><path d="M0 0h8L4 5z" fill="#7d8385" /></svg>
    </button>
    <input aria-label="Команда" placeholder="Введите команду" className="ml-[6px] min-w-0 flex-1 bg-transparent font-['Liberation_Mono',monospace] text-xs italic outline-none placeholder:text-[#8b9193]" />
    <button aria-label="Журнал" className="px-[3px]"><svg width="8" height="5" viewBox="0 0 8 5"><path d="M0 5h8L4 0z" fill="#7d8385" /></svg></button>
  </div>
);

/* ---------- status bar ---------- */

const compass = <path d="M8 0l2.200 8L14 15.500l-4-2.500-2-4-2 4-4 2.500L5.800 8z" fill={W} stroke={W} strokeWidth=".8" />;
const warn = (c) => (
  <g stroke="none"><path d="M11 7l5 9H6z" fill={c} /><path d="M10.500 10h1.200v3h-1.200zM10.500 14h1.200v1h-1.200z" fill="#222" /></g>
);

const status = [
  [["grid", <Ico key="i"><path d="M4.500 1v14M8.500 1v14M12.500 1v14M1 4.500h15M1 8.500h15M1 12.500h15" /></Ico>], ["snap", <Ico key="i"><path d="M2 3.500h13M2 8.500h13M2 13.500h13" strokeWidth="2" strokeDasharray="2 3" /></Ico>], "caret"],
  [["ortho", <Ico key="i"><path d="M1.500 0v14.500H16M1.500 9.500h5v5" /></Ico>], ["polar", <Ico key="i"><circle cx="7.500" cy="8.500" r="6.500" strokeWidth="1.300" stroke="#fff" /><path d="M7.500 8.500L13 2M7.500 8.500H16M12 6v5" stroke="#fff" /></Ico>, true], "caret", ["iso", <Ico key="i"><path d="M2 1l12 14" stroke="#d06a6a" /><path d="M8 0v16" stroke="#5cba7a" /><circle cx="8" cy="8" r="1.500" /></Ico>], "caret", ["track", <Ico key="i"><path d="M1 13.500h15M1 13.500L14 1" stroke="#fff" /><circle cx="7" cy="8" r="1.500" fill="#fff" stroke="none" /></Ico>, true], ["osnap", <Ico key="i"><path d="M6 3.500h9v12H2.500V7" stroke="#fff" strokeWidth="1.200" /><rect x="1" y="1" width="4" height="4" stroke="#fff" /></Ico>, true], "caret"],
  [["lwt", <Ico key="i"><path d="M0 2h16M0 5.500h10" /><path d="M0 9.500h16" strokeWidth="2" /><path d="M0 13.500h10" strokeWidth="2.500" /><path d="M10 13h6" /></Ico>], ["cycle", <Ico key="i"><path d="M6 6h10v10H6z" fill="#fff" stroke="none" /><path d="M4 12V4h9M3.500 0v7M0 3.500h7" stroke="#fff" strokeWidth="1.300" /></Ico>, true]],
  [["ucs", <Ico key="i"><path d="M3.500 2v10.500H15M1.500 4l2-3 2 3M13 10.500l2.500 2-2.500 2M11 2L8 6h4L9 10" /></Ico>]],
  [["annovis", <Ico key="i">{compass}<circle cx="13" cy="4" r="2.300" stroke="#fff" /></Ico>, true], ["annoauto", <Ico key="i">{compass}<path d="M14 0l-3 4h3l-2 4" stroke="#fff" /></Ico>], ["anno", <Ico key="i">{compass}</Ico>], "scale"],
  [["gear", <Ico key="i"><circle cx="8" cy="8" r="4" strokeWidth="3.500" /><path d="M8 0v3M8 13v3M0 8h3M13 8h3M2.500 2.500l2 2M11.500 11.500l2 2M13.500 2.500l-2 2M4.500 11.500l-2 2" strokeWidth="2.600" /></Ico>], "caret"],
  [["plus", <Ico key="i"><path d="M8 0v16M0 8h16" strokeWidth="1.800" /></Ico>]],
  [["isolate", <Ico key="i"><rect x="1.500" y="1" width="5" height="5" /><circle cx="13" cy="7" r="2.500" /><path d="M7.500 10l3.500 5.500H4z" /></Ico>]],
  [["hw", <Ico key="i"><circle cx="7" cy="7" r="6.500" fill="#3e84c9" stroke="none" /><path d="M1 2h12M3 7h9" /><path d="M0 9h7v5H0z" fill="#e8b33c" stroke="none" />{warn("#f2bd33")}</Ico>], ["monitor", <Ico key="i"><path d="M0 0h14v13H0z" fill="#e9ebed" stroke="none" /><path d="M2 8l3-5 3 6 3-4" stroke="#3e84c9" />{warn("#ef8b44")}</Ico>]],
  [["clean", <Ico key="i"><rect x=".7" y="2.500" width="14.500" height="11.500" strokeWidth="1.400" /><path d="M9 8l3.500-3M10 5h2.700v2.500M7 9l-3.500 3M6 12H3.300V9.500" /></Ico>], ["menu", <Ico key="i"><path d="M0 2h16M0 8h16M0 14h16" strokeWidth="2" /></Ico>]],
];

const StatusBar = () => (
  <div className="flex h-6 gap-[3px] pr-[2px] pt-[2px]">
    <button className="h-6 w-14 bg-[#333b48] text-white">МОДЕЛЬ</button>
    {status.map((g, i) => (
      <div key={i} className="flex h-6 bg-[#333b48]">
        {g.map((it, j) => {
          if (it === "caret") return <button key={j} aria-label="Меню" className="flex w-[15px] items-center justify-center"><Caret big /></button>;
          if (it === "scale") return <button key={j} className="flex w-[34px] items-center justify-center gap-[3px] text-white">1:1<Caret big /></button>;
          return (
            <button key={j} aria-label={it[0]} className={clsx("flex w-6 items-center justify-center", it[2] && "border-x border-[#333b48] bg-[#5a8cc2]")}>
              {it[1]}
            </button>
          );
        })}
      </div>
    ))}
  </div>
);

/* ---------- page ---------- */

const tabs = ["Главная", "Вставка", "Аннотации", "Параметризация", "3D-инструменты", "Визуализация", "Вид", "Управление", "Вывод", "Надстройки", "Совместная работа", "Рекомендованные приложения", "Express Tools", "Raster Tools"];

export default function App() {
  const [tab, setTab] = useState("Главная");

  return (
    <div className="flex min-h-screen flex-col bg-[#222933] font-['Noto_Sans',sans-serif] text-[11px] text-[#e6e8ea]">
      {/* Title bar and ribbon tabs */}
      <header className="flex h-[49px] pl-1">
        <button aria-label="Меню приложения" className="mt-1 flex h-[41px] w-[41px] shrink-0 items-center border border-[#11151a] bg-linear-to-b from-[#d0d0d0] to-[#7e7f80] pl-[3px]">
          <svg width="36" height="34" viewBox="0 0 36 34">
            <path d="M0 26L8 0h8l9 26h-7l-2-7-8 1.500L5.500 26z" fill="#c9242b" />
            <path d="M8 0l4 5-6 13-6 8zM16 0l9 26-6-4-6-15z" fill="#e2373c" />
            <path d="M4 17c5-3.500 10-3.500 14-1l1.500 4c-5-2.500-11-1.500-16.500 3z" fill="#9d1a20" />
            <path d="M12 6l3 8.500-5.500.800z" fill="#c2c2c2" />
            <path d="M27 17h7l-3.500 4z" fill="#3b3b3b" />
          </svg>
        </button>
        <div className="flex min-w-0 flex-1 flex-col">
          <div className="flex h-[30px] items-center pl-[9px] pr-[10px]">
            <div className="flex items-center gap-2">
              {quick.map(([name, icon]) => <button key={name} aria-label={name}>{icon}</button>)}
              <button aria-label="Отменить"><Ico><path d="M0 7l7-6v3.500c6 0 9 3 9 6-2-2-4-2.500-9-2.500V13z" fill={W} stroke="none" /></Ico></button>
              <button aria-label="Список отмен" className="-mx-[2px]"><Caret /></button>
              <button aria-label="Повторить"><Ico><path d="M16 7L9 1v3.500c-6 0-9 3-9 6 2-2 4-2.500 9-2.500V13z" fill="#5b626c" stroke="none" /></Ico></button>
              <button aria-label="Список повторов" className="-mx-[2px] opacity-60"><Caret /></button>
              <button aria-label="Настройка панели" className="ml-1"><Ico w={8} h={8}><path d="M0 .800h8" strokeWidth="1.500" /><path d="M0 3.500h8L4 8z" fill={W} stroke="none" /></Ico></button>
            </div>
            <h1 className="flex-1 truncate text-center whitespace-pre">Autodesk AutoCAD 2020{"    "}Проект общестанционной автоматизации КС.dwg</h1>
            <Ico w={5} h={8}><path d="M0 0l5 4-5 4z" fill={W} stroke="none" /></Ico>
            <input aria-label="Поиск" placeholder="Введите ключевое слово/фразу" className="ml-[5px] h-5 w-[178px] bg-[#4a5464] px-[2px] italic outline-none placeholder:text-[#b4bac2]" />
            <button aria-label="Найти" className="ml-[6px]">
              <Ico w={14} h={14}><path d="M2 1h3v3h4V1h3v3l2 5v5H9V8H5v6H0V9l2-5z" fill={W} stroke="none" /><path d="M0 10.500h5M9 10.500h5" stroke="#222933" /></Ico>
            </button>
            <button className="ml-[10px] flex items-center gap-[6px]">
              <Ico w={14} h={14}><path d="M3.500 4.500a3.500 4.500 0 0 1 7 0c0 2-1 4-2 4.500v1l5.500 2v2H0v-2l5.500-2V9c-1-.5-2-2.500-2-4.500z" fill="#f2f3f4" stroke="none" /></Ico>
              Вход в службы
              <Caret />
            </button>
            <button aria-label="Корзина" className="ml-3"><Ico><path d="M0 2h3l2 8h8" strokeWidth="1.500" /><path d="M4 4h11l-1.500 5H5z" fill={W} stroke="none" /><circle cx="6" cy="13" r="1.300" fill={W} /><circle cx="12" cy="13" r="1.300" fill={W} /></Ico></button>
            <button className="ml-2 flex items-center gap-[6px]" aria-label="Autodesk">
              <Ico w={15} h={14}><path d="M7.500 3L2.500 11h10z" strokeWidth="1.500" stroke="#b9c9ee" /><circle cx="7.500" cy="2.500" r="1.800" fill={W} /><circle cx="2.500" cy="11" r="1.800" fill={W} /><circle cx="12.500" cy="11" r="1.800" fill={W} /></Ico>
              <Caret />
            </button>
            <span className="mx-[9px] h-[17px] w-px bg-[#59616d]" />
            <button className="flex items-center gap-2" aria-label="Справка">
              <span className="flex h-[14px] w-[14px] items-center justify-center rounded-full bg-white font-bold text-[#24467c]">?</span>
              <Caret />
            </button>
            <div className="ml-[72px] flex items-center gap-[13px]">
              <button aria-label="Свернуть"><Ico w={9} h={12}><path d="M0 10.500h9" strokeWidth="2" /></Ico></button>
              <button aria-label="Развернуть"><Ico w={12} h={11}><path d="M.700.700h10.600v9.600H.700zM1 1.500h10" strokeWidth="1.300" /></Ico></button>
              <button aria-label="Закрыть"><Ico w={12} h={12}><path d="M1 1l10 10M11 1L1 11" strokeWidth="1.800" /></Ico></button>
            </div>
          </div>
          <nav className="flex h-[19px] items-end pl-[5px]">
            {tabs.map((t) => (
              <button key={t} onClick={() => setTab(t)} className={clsx("flex h-[18px] items-start whitespace-nowrap px-[11px] leading-[15px]", t === tab ? "bg-[#3b4453] text-white" : "text-[#a9aeb5]")}>
                {t}
              </button>
            ))}
            <button aria-label="Свернуть ленту" className="ml-5 flex h-[18px] items-center gap-[6px]">
              <Ico w={14} h={8}><rect width="14" height="8" rx="2" fill={W} stroke="none" /><path d="M4 6l3-3.500L10 6z" fill="#222933" stroke="none" /></Ico>
              <Caret />
            </button>
          </nav>
        </div>
      </header>

      <div className="flex flex-1 flex-col border-x-4 border-b-4 border-[#3b4453]">
        {/* Ribbon */}
        <div className="flex h-[97px] pl-[2px]">
          <Panel title="Рисование" width="w-[261px]">
            <BigTool icon="line" lines={["Отрезок"]} width="w-[55px]" />
            <BigTool icon="pline" lines={["Полилиния"]} width="w-[66px]" />
            <BigTool icon="circle" lines={["Круг"]} caret width="w-[50px]" />
            <BigTool icon="arc" lines={["Дуга"]} caret width="w-[45px]" />
            <SmallCol items={[["rect", 1], ["ellipse", 1], ["hatch", 1]]} pad="pl-[6px]" />
          </Panel>
          <Panel title="Редактирование" width="w-[133px]">
            <SmallCol items={[["move"], ["copy"], ["stretch"]]} width="w-9" pad="pl-[6px]" />
            <SmallCol items={[["rotate"], ["mirror"], ["scale"]]} width="w-[30px]" />
            <SmallCol items={[["trim", 1], ["fillet", 1], ["array", 1]]} width="w-10" />
            <SmallCol items={[["erase"], ["box"], ["offset"]]} />
          </Panel>
          <Panel title="Аннотации" width="w-[140px]">
            <BigTool icon="text" lines={["Текст"]} caret width="w-[56px]" />
            <BigTool icon="dim" lines={["Размер"]} width="w-[42px]" />
            <SmallCol items={[["linear", 1], ["leader", 1], ["table"]]} pad="pl-[7px]" />
          </Panel>
          <Panel title="Слои" width="w-[271px]">
            <BigTool icon="layers" lines={["Свойства", "слоя"]} width="w-[61px]" />
            <div className="flex flex-1 flex-col pr-[3px] pt-[5px]">
              <Combo label="Слой" text="По умолчанию">
                <span className="-ml-[3px] mr-1 flex items-center gap-[3px]">
                  <Ico w={12} h={16}><circle cx="6" cy="6" r="5" fill={Y} stroke="none" /><path d="M3.500 12h5v1.500l-1 2h-3l-1-2z" fill="#fff" stroke="none" /></Ico>
                  <Ico w={18}>{sun(9, 8, 6)}</Ico>
                  <Ico><path d="M1 7h10v9H1z" fill={Y} stroke="none" /><path d="M9 7V4a2.500 2.500 0 0 1 5 0v4" stroke={Y} strokeWidth="2" /><path d="M6 10v3" stroke="#3b4453" strokeWidth="2" /></Ico>
                  <span className="ml-[2px] h-[14px] w-[14px] bg-black" />
                </span>
              </Combo>
              {[["l1", "l2", "l3", "l4", "l5"], ["l6", "l7", "l8", "l9", "l10"]].map((row) => (
                <div key={row[0]} className="flex h-6 items-center gap-2 pl-[3px] pt-[3px]">
                  {row.map((n) => <button key={n} aria-label={n}>{sm[n]}</button>)}
                </div>
              ))}
            </div>
          </Panel>
          <Panel title="Блок" width="w-[86px]">
            <BigTool icon="insert" lines={["Вставка"]} caret width="w-[48px]" />
            <SmallCol items={[["b1"], ["b2"], ["b3", 1]]} pad="pl-[3px]" />
          </Panel>
          <Panel title="Свойства" width="w-[243px]" launcher>
            <BigTool icon="match" lines={["Копирование", "свойств"]} width="w-[84px]" />
            <SmallCol items={[["wheel"], ["weights"], ["types"]]} width="w-5" pad="pl-px" />
            <div className="flex flex-1 flex-col gap-[3px] pr-[2px] pt-[5px]">
              <Combo label="Цвет" text="ПоСлою">
                <span className="ml-1 mr-[9px] h-4 w-4 border border-[#9aa1ab] bg-black" />
              </Combo>
              {[["Вес линий", "0.00 мм"], ["Тип линий", "SolidLi..."]].map(([label, text]) => (
                <Combo key={label} label={label} text={text}>
                  <span className="-ml-[6px] mr-[2px] h-px w-[64px] bg-white" />
                </Combo>
              ))}
            </div>
          </Panel>
          <Panel title="Группы" width="w-[75px]">
            <BigTool icon="group" lines={["Группа"]} width="w-[49px]" />
            <SmallCol items={[["g1"], ["g2"], ["g3"]]} pad="pl-[3px]" />
          </Panel>
          <Panel title="Утилиты" width="w-[106px]">
            <BigTool icon="measure" lines={["Измерить"]} caret width="w-[80px]" />
            <SmallCol items={[["u1"], ["u2"], ["u3"]]} pad="pl-[3px]" />
          </Panel>
          <Panel title="Буфер обмена" width="w-[100px]" noCaret>
            <BigTool icon="paste" lines={["Вставить"]} caret width="w-[74px]" />
            <SmallCol items={[["c1"], ["c2"]]} pad="pl-[3px]" />
          </Panel>
          <button className="my-px ml-px flex w-[58px] flex-col items-center bg-[#4c586b] pb-[5px] pt-[3px]">
            {big.view}
            <span className="leading-4">Вид</span>
            <span className="mt-auto"><Caret big /></span>
          </button>
        </div>

        {/* Open files */}
        <div className="flex h-[27px] items-end pl-4">
          <button className="h-[22px] w-[130px] rounded-t-[9px] bg-[#2d3541] pl-4 pt-[2px] text-left text-[#a9aeb5]">Начало</button>
          <div className="flex h-[22px] w-[268px] items-center justify-between rounded-t-[9px] bg-[#3b4453] pl-[9px] pr-[10px] pt-[2px]">
            <button className="text-white">Проект общестанци...й автоматизации КС</button>
            <button aria-label="Закрыть файл"><Ico w={8} h={8}><path d="M.5.5l7 7M7.500.500l-7 7" strokeWidth="1.800" stroke="#a9aeb5" /></Ico></button>
          </div>
          <button aria-label="Новый файл" className="mb-1 ml-[10px] flex h-[14px] w-5 items-center justify-center rounded-md bg-[#2d3541]"><Ico w={9} h={9}><path d="M4.500 0v9M0 4.500h9" strokeWidth="1.500" /></Ico></button>
        </div>
        <div className="h-1 bg-[#3b4453]" />

        {/* Model space */}
        <main className="relative min-h-[828px] flex-1 overflow-hidden bg-[#d3dddf]">
          <Drawing />
          <div className="absolute left-[3px] top-[6px] text-xs leading-4 text-[#14191b]">[−][Сверху][2D-каркас]</div>
          <div className="absolute right-[10px] top-[9px] flex gap-[7px]">
            {["M1 6.500h11v4H1z", "M4 1.500h8v8H4zM1.500 4h8v7.500h-8zM4.500 6.500h2v2h-2z", "M2 2l3 0 2 2.500L9 2h3L8.500 6.500 12 11H9L7 8.500 5 11H2l3.500-4.500z"].map((d) => (
              <button key={d} aria-label="Окно вида"><Ico w={13} h={13}><path d={d} stroke="#5a6365" strokeWidth="1.300" fill="#eef2f3" /></Ico></button>
            ))}
          </div>
          <ViewCube />
          <NavBar />
          <svg className="absolute bottom-[11px] left-[14px]" width="76" height="82" viewBox="0 0 76 82" fill="none" stroke="#14191b" role="img" aria-label="ПСК">
            <path d="M6.500 22V72.500H57M2.500 68.500h8v8h-8z" strokeWidth="1.200" />
            <path d="M8 5l6 7 6-7M14 12v6M61 59l12 12M73 59L61 71" strokeWidth="1.200" />
          </svg>
          <svg className="absolute bottom-0 right-0" width="90" height="83" viewBox="0 0 90 83" fill="none" stroke="#14191b" aria-hidden="true">
            <path d="M48.500 0v45M48.500 51v32M0 48.500h45M52 48.500h38M45.500 45.500h6v6h-6z" strokeWidth="1.400" />
          </svg>
          <CommandLine />
        </main>

        {/* Layout tabs and status bar */}
        <footer className="flex h-[29px] justify-between">
          <div className="flex h-[18px] items-stretch pl-[10px]">
            <button className="rounded-b-lg bg-[#3b4453] px-[13px] font-bold text-white">Модель</button>
            <button className="rounded-b-lg bg-[#2d3541] px-3 text-[#b4b9bf]">Layout1</button>
            <button className="rounded-b-lg bg-[#2d3541] px-3 text-[#b4b9bf]">Layout2</button>
            <button aria-label="Новый лист" className="ml-1 flex w-[22px] items-center justify-center rounded-b-lg bg-[#2d3541]"><Ico w={9} h={9}><path d="M4.500 0v9M0 4.500h9" strokeWidth="1.500" /></Ico></button>
          </div>
          <StatusBar />
        </footer>
      </div>
    </div>
  );
}
